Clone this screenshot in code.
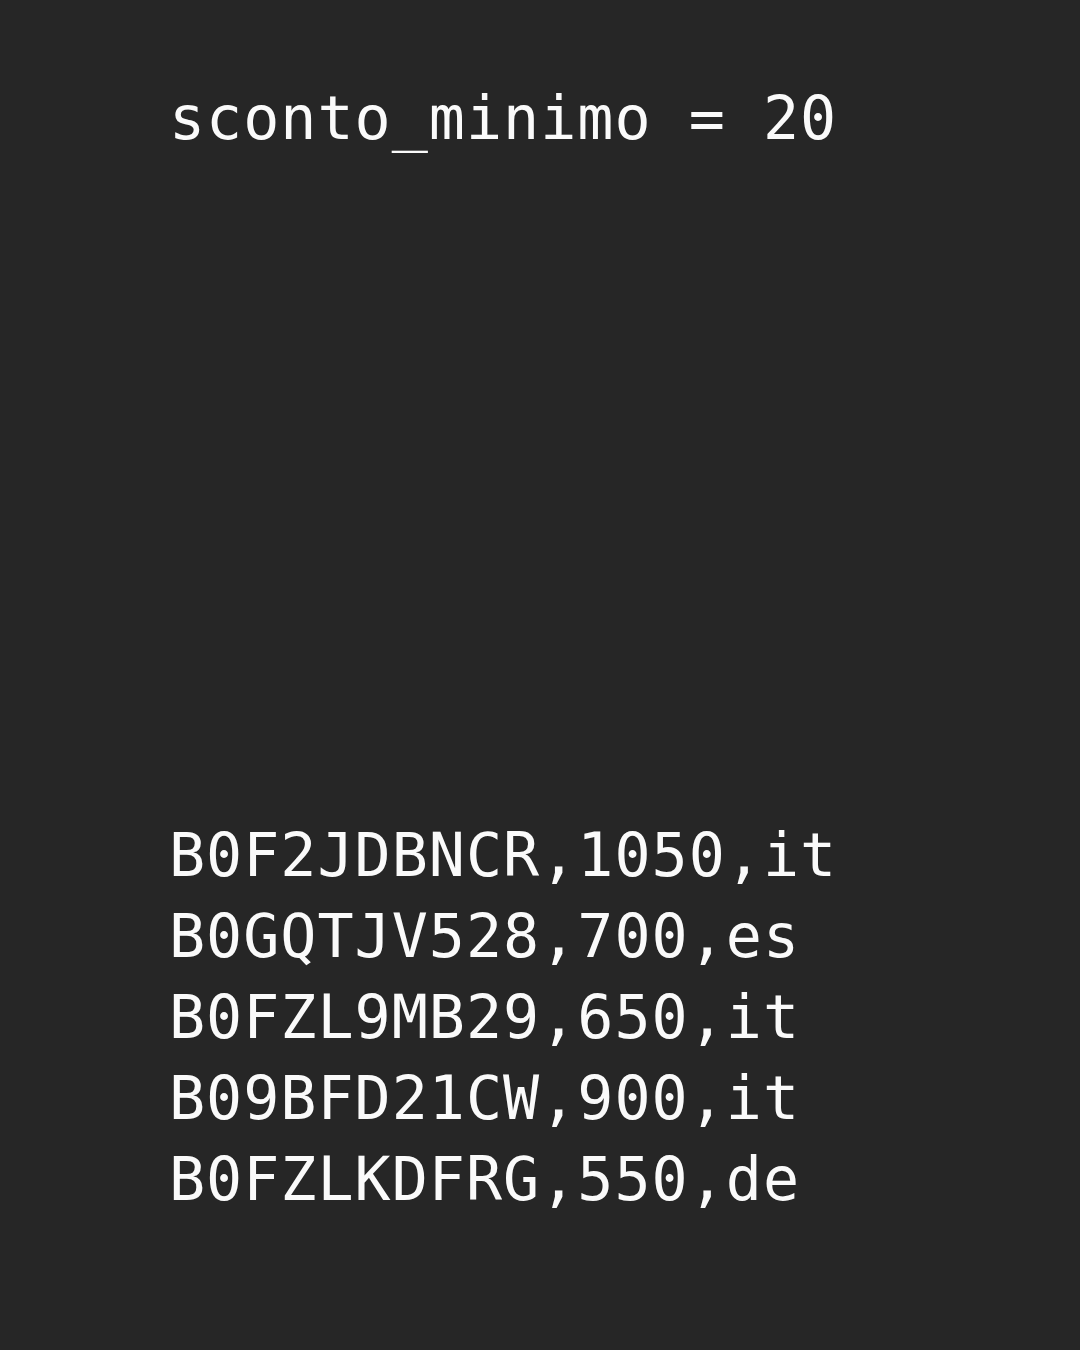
import React from 'react';

const rows = [
  'B0F2JDBNCR,1050,it',
  'B0GQTJV528,700,es',
  'B0FZL9MB29,650,it',
  'B09BFD21CW,900,it',
  'B0FZLKDFRG,550,de',
];

const App: React.FC = () => {
  return (
    <div
      className="w-[1080px] h-[1350px] bg-[#262626] text-[#fafafa] pl-[169px] pt-[78px] text-[60px] tracking-[1px] leading-[81px] whitespace-pre"
      style={{ fontFamily: '"DejaVu Sans Mono", "Liberation Mono", monospace' }}
    >
      <div>sconto_minimo = 20</div>
      <div className="mt-[656px]">
        {rows.map((row) => (
          <div key={row}>{row}</div>
        ))}
      </div>
    </div>
  );
};

export default App;
